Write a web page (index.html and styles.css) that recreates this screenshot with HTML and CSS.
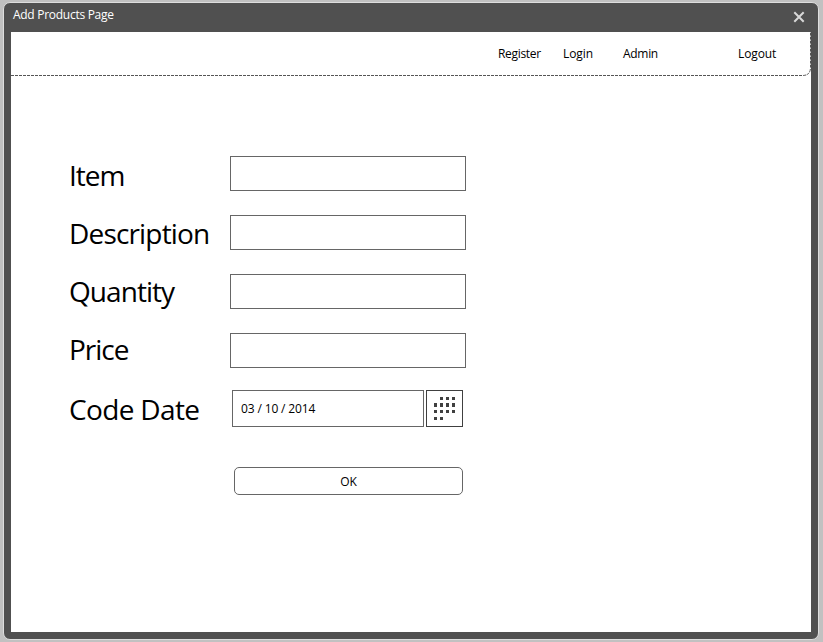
FILE: index.html
```html
<!DOCTYPE html>
<html lang="en">
<head>
<meta charset="utf-8">
<title>Add Products Page</title>
<link rel="stylesheet" href="styles.css">
</head>
<body>
<div class="window">
  <header class="titlebar">
    <span class="title">Add Products Page</span>
    <svg class="close" width="12" height="12" viewBox="0 0 12 12"><path d="M1.3 1.3 10.7 10.7M10.7 1.3 1.3 10.7"/></svg>
  </header>
  <main class="page">
    <nav class="nav">
      <svg class="nav-frame" width="800" height="44" viewBox="0 0 800 44"><path d="M0 43.5H791.500Q799.500 43.500 799.500 35.500V0"/></svg>
      <a class="link register">Register</a>
      <a class="link login">Login</a>
      <a class="link admin">Admin</a>
      <a class="link logout">Logout</a>
    </nav>
    <form class="form">
      <div class="row"><label class="label item" for="item">Item</label><input class="field" id="item"></div>
      <div class="row"><label class="label description" for="description">Description</label><input class="field" id="description"></div>
      <div class="row"><label class="label quantity" for="quantity">Quantity</label><input class="field" id="quantity"></div>
      <div class="row"><label class="label price" for="price">Price</label><input class="field" id="price"></div>
      <div class="row date-row">
        <span class="label code-date">Code Date</span>
        <div class="date">03 / 10 / 2014</div>
        <button class="picker" type="button" aria-label="Choose date">
          <svg width="35" height="35" viewBox="0 0 35 35"><path d="M13 6h3v3h-3zM19 6h3v3h-3zM25 6h3v3h-3zM7 12h3v4h-3zM13 12h3v4h-3zM19 12h3v4h-3zM25 12h3v4h-3zM7 19h3v3h-3zM13 19h3v3h-3zM19 19h3v3h-3zM25 19h3v3h-3zM7 26h3v3h-3zM13 26h3v3h-3z"/></svg>
        </button>
      </div>
      <button class="ok" type="button">OK</button>
    </form>
  </main>
</div>
</body>
</html>
```
FILE: styles.css
```css
* { box-sizing: border-box; }
body {
  margin: 0;
  height: 642px;
  padding: 2px 4px 2px 3px;
  overflow: hidden;
  background: #c1c1c1;
  color: #000;
  font: 12px/16px "Open Sans", sans-serif;
}
.window {
  height: 638px;
  padding: 0 7px;
  border: 1px solid #dedede;
  border-radius: 7px;
  background: #505050;
}
.titlebar {
  display: flex;
  justify-content: space-between;
  height: 29px;
  padding: 4px 6px 0 2px;
  color: #fff;
}
.title { letter-spacing: -0.28px; }
.close { margin-top: 4px; fill: none; stroke: #d8d8d8; stroke-width: 2; }
.page { width: 800px; height: 600px; background: #fff; }
.nav {
  position: relative;
  display: flex;
  height: 44px;
  padding: 14px 0 0 487px;
}
.nav-frame {
  position: absolute;
  left: 0;
  top: 0;
  fill: none;
  stroke: #555;
  stroke-dasharray: 3 1;
}
.link { white-space: nowrap; letter-spacing: -0.1px; }
.register { width: 65px; letter-spacing: -0.32px; }
.login { width: 60px; }
.admin { width: 115px; letter-spacing: -0.3px; }
.form { width: 455px; padding: 80px 0 0 58px; }
.row { display: flex; height: 35px; margin-bottom: 24px; }
.label {
  flex: none;
  width: 161px;
  margin-top: -1px;
  font-size: 28px;
  line-height: 40px;
  white-space: nowrap;
}
.item { letter-spacing: -1px; }
.description { margin-top: -2px; letter-spacing: -0.83px; }
.quantity { margin-top: -3px; letter-spacing: -0.95px; }
.price { margin-top: -4px; letter-spacing: -1px; }
.code-date { width: 163px; letter-spacing: -0.65px; }
.field {
  width: 236px;
  height: 35px;
  padding: 0 8px;
  border: 1px solid #666;
  background: #fff;
  font: inherit;
}
.date-row { height: 37px; margin: -2px 0 40px; }
.date {
  width: 192px;
  margin-right: 2px;
  padding: 10px 8px;
  border: 1px solid #666;
  letter-spacing: -0.14px;
}
.picker {
  width: 37px;
  height: 37px;
  padding: 0;
  border: 1px solid #404040;
  background: #fff;
}
.picker svg { display: block; fill: #404040; }
.ok {
  display: block;
  width: 229px;
  height: 28px;
  margin-left: 165px;
  padding: 2px 0 0;
  border: 1px solid #666;
  border-radius: 5px;
  background: #fff;
  color: #000;
  font: inherit;
}
```
